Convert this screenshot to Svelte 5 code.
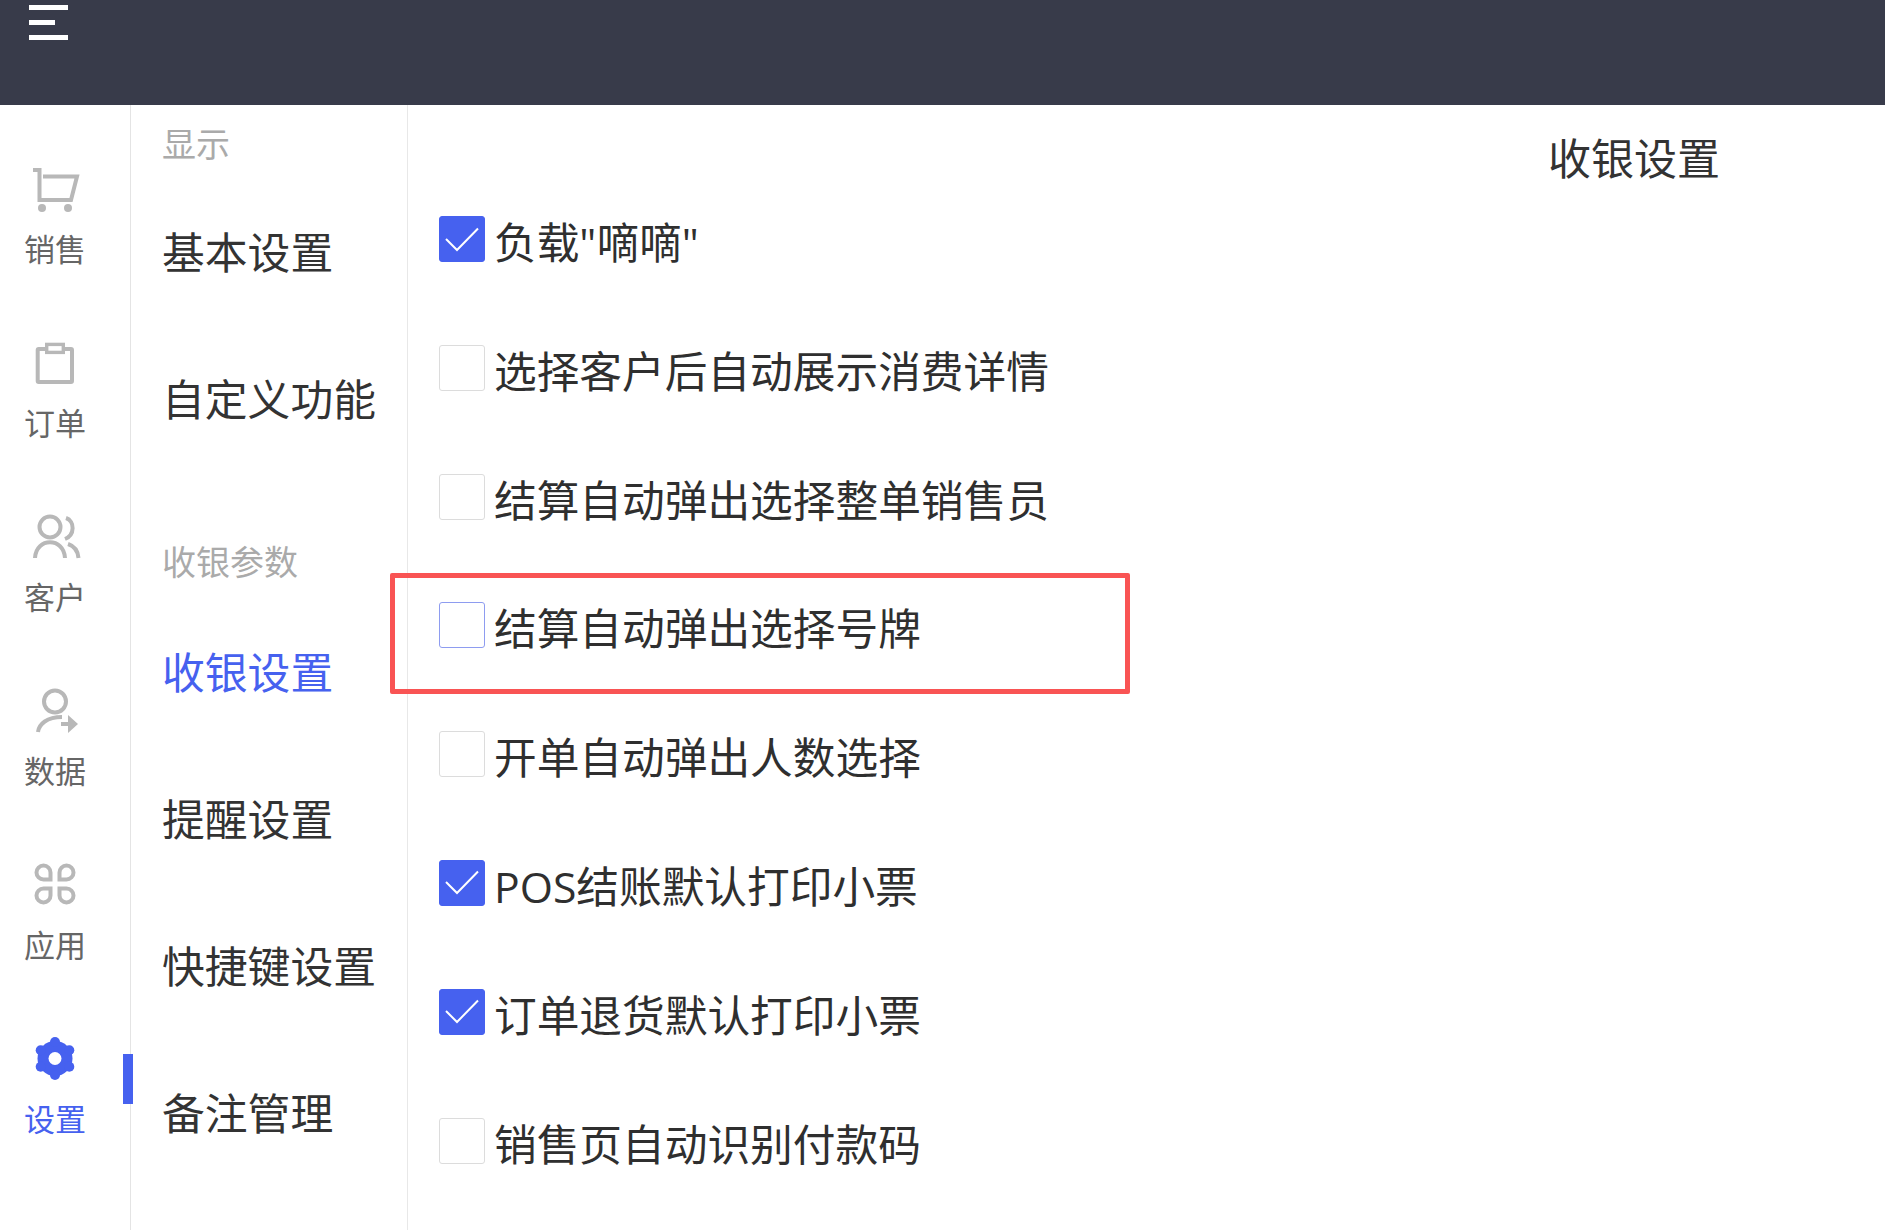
<script>
  const railItems = [
    { key: 'cart', label: '销售' },
    { key: 'order', label: '订单' },
    { key: 'customer', label: '客户' },
    { key: 'data', label: '数据' },
    { key: 'apps', label: '应用' },
    { key: 'settings', label: '设置', active: true }
  ];

  const menu = [
    { title: '显示', items: [{ label: '基本设置' }, { label: '自定义功能' }] },
    {
      title: '收银参数',
      items: [
        { label: '收银设置', active: true },
        { label: '提醒设置' },
        { label: '快捷键设置' },
        { label: '备注管理' }
      ]
    }
  ];

  const options = [
    { label: '负载"嘀嘀"', checked: true },
    { label: '选择客户后自动展示消费详情' },
    { label: '结算自动弹出选择整单销售员' },
    { label: '结算自动弹出选择号牌', marked: true },
    { label: '开单自动弹出人数选择' },
    { label: 'POS结账默认打印小票', checked: true },
    { label: '订单退货默认打印小票', checked: true },
    { label: '销售页自动识别付款码' }
  ];

  const lobes = [0, 60, 120, 180, 240, 300].map((deg) => ({
    x: 30 + 16.5 * Math.cos(((deg - 90) * Math.PI) / 180),
    y: 28.5 + 16.5 * Math.sin(((deg - 90) * Math.PI) / 180)
  }));
</script>

<div class="page">
  <header class="topbar">
    <div class="burger">
      <span></span>
      <span class="short"></span>
      <span></span>
    </div>
  </header>

  <div class="body">
    <nav class="rail">
      {#each railItems as item}
        <div class="rail-item" class:active={item.active}>
          <svg viewBox="0 0 60 60" width="60" height="60">
            {#if item.key === 'cart'}
              <g class="line">
                <path d="M8 10H14.5V40H46L52 16.5H18" />
              </g>
              <circle class="solid" cx="17" cy="48" r="4" />
              <circle class="solid" cx="43" cy="48" r="4" />
            {:else if item.key === 'order'}
              <g class="line">
                <rect x="12.7" y="15" width="34.3" height="33" rx="1" />
                <rect class="clip" x="21.7" y="10.4" width="16.6" height="8" />
              </g>
            {:else if item.key === 'customer'}
              <g class="line">
                <circle cx="25" cy="19" r="10.5" />
                <path d="M10 50C11 29 39 29 40 50" />
                <path d="M41 10C50 13 50 27 40 31" />
                <path d="M43 36C49 38 53 43 53.5 50" />
              </g>
            {:else if item.key === 'data'}
              <g class="line">
                <circle cx="30" cy="19.5" r="11" />
                <path d="M13 50C14 42 22 35 37 35" />
                <path d="M36 42H46" />
              </g>
              <path class="solid" d="M43 33L53 42L43 51Z" />
            {:else if item.key === 'apps'}
              <g class="line">
                <path d="M25.5 23.5H18.5A7 7 0 1 1 25.5 16.5Z" />
                <path d="M34.5 23.5H41.5A7 7 0 1 0 34.5 16.5Z" />
                <path d="M25.5 32.5H18.5A7 7 0 1 0 25.5 39.5Z" />
                <path d="M34.5 32.5H41.5A7 7 0 1 1 34.5 39.5Z" />
              </g>
            {:else}
              <circle class="gear" cx="30" cy="28.5" r="17.5" />
              {#each lobes as l}
                <circle class="gear" cx={l.x} cy={l.y} r="5" />
              {/each}
              <circle class="hole" cx="30" cy="28.5" r="6.5" />
            {/if}
          </svg>
          <span class="rail-label">{item.label}</span>
        </div>
      {/each}
      <i class="rail-marker"></i>
    </nav>

    <aside class="menu">
      {#each menu as section}
        <section class="menu-section">
          <h4>{section.title}</h4>
          {#each section.items as item}
            <div class="menu-item" class:active={item.active}>{item.label}</div>
          {/each}
        </section>
      {/each}
    </aside>

    <main class="content">
      <h2 class="title">收银设置</h2>
      <div class="options">
        {#each options as opt}
          <label class="option" class:marked={opt.marked}>
            <span class="box" class:checked={opt.checked} class:focus={opt.marked}>
              {#if opt.checked}
                <svg viewBox="0 0 46 46" width="46" height="46">
                  <path d="M7 23L18 34L39 12.5" />
                </svg>
              {/if}
            </span>
            <span class="text">{opt.label}</span>
          </label>
        {/each}
      </div>
    </main>
  </div>
</div>

<style>
  :global(body) {
    margin: 0;
    background: #fff;
    overflow: hidden;
  }
  .page {
    width: 1885px;
    height: 1230px;
    display: flex;
    flex-direction: column;
    overflow: hidden;
    font-family: "Open Sans", "Noto Sans CJK SC", sans-serif;
    color: #333;
  }
  .topbar {
    height: 105px;
    flex: none;
    background: #383b4a;
    padding: 5px 0 0 29px;
    box-sizing: border-box;
  }
  .burger {
    width: 39px;
    display: flex;
    flex-direction: column;
    gap: 10px;
  }
  .burger span {
    display: block;
    height: 5px;
    background: #fff;
  }
  .burger .short {
    width: 26px;
  }
  .body {
    flex: 1;
    display: flex;
    min-height: 0;
  }
  .rail {
    position: relative;
    width: 131px;
    flex: none;
    box-sizing: border-box;
    border-right: 1px solid #e4e4e4;
    padding: 55px 20px 0 0;
  }
  .rail-item {
    height: 174px;
    display: flex;
    flex-direction: column;
    align-items: center;
  }
  .rail-item svg {
    display: block;
  }
  .rail-label {
    margin-top: 9px;
    font-size: 31px;
    line-height: 40px;
    color: #666;
  }
  .active .rail-label {
    color: #4661ef;
  }
  .line {
    fill: none;
    stroke: #b8b8b8;
    stroke-width: 4;
  }
  .clip {
    fill: #fff;
    stroke-width: 3.4;
  }
  .solid {
    fill: #b8b8b8;
  }
  .gear {
    fill: #4661ef;
  }
  .hole {
    fill: #fff;
  }
  .rail-marker {
    position: absolute;
    left: 123px;
    top: 949px;
    width: 10px;
    height: 50px;
    background: #4661ef;
  }
  .menu {
    width: 277px;
    flex: none;
    box-sizing: border-box;
    border-right: 1px solid #e8e8e8;
    padding: 14px 0 0 31px;
  }
  .menu-section + .menu-section {
    margin-top: 66px;
  }
  h4 {
    margin: 0 0 8px;
    font-size: 34px;
    line-height: 50px;
    font-weight: 400;
    color: #aaa;
  }
  .menu-section + .menu-section h4 {
    margin-bottom: 9.5px;
  }
  .menu-item {
    height: 147px;
    display: flex;
    align-items: center;
    font-size: 42.8px;
    white-space: nowrap;
    color: #333;
  }
  .menu-item.active {
    color: #4661ef;
  }
  .content {
    flex: 1;
    min-width: 0;
    padding-left: 31px;
  }
  .title {
    margin: 0;
    height: 111px;
    padding: 24px 165px 0 0;
    box-sizing: border-box;
    text-align: right;
    font-size: 43px;
    line-height: 60px;
    font-weight: 400;
  }
  .options {
    display: flex;
    flex-direction: column;
  }
  .option {
    position: relative;
    height: 128.8px;
    display: flex;
    align-items: flex-start;
    gap: 9px;
  }
  .option.marked::after {
    content: "";
    position: absolute;
    left: -49px;
    top: -29px;
    width: 740px;
    height: 121px;
    box-sizing: border-box;
    border: 5px solid #f95454;
    border-radius: 2px;
  }
  .box {
    width: 46px;
    height: 46px;
    flex: none;
    box-sizing: border-box;
    border: 1.5px solid #dcdcdc;
    border-radius: 3px;
    position: relative;
  }
  .box.focus {
    border-color: #8e9cf0;
  }
  .box.checked {
    background: #4661ef;
    border-color: #4661ef;
  }
  .box svg {
    position: absolute;
    left: -1.5px;
    top: -1.5px;
    fill: none;
    stroke: #fff;
    stroke-width: 2;
  }
  .text {
    font-size: 42.7px;
    line-height: 54px;
    white-space: nowrap;
    color: #2f2f2f;
  }
</style>
